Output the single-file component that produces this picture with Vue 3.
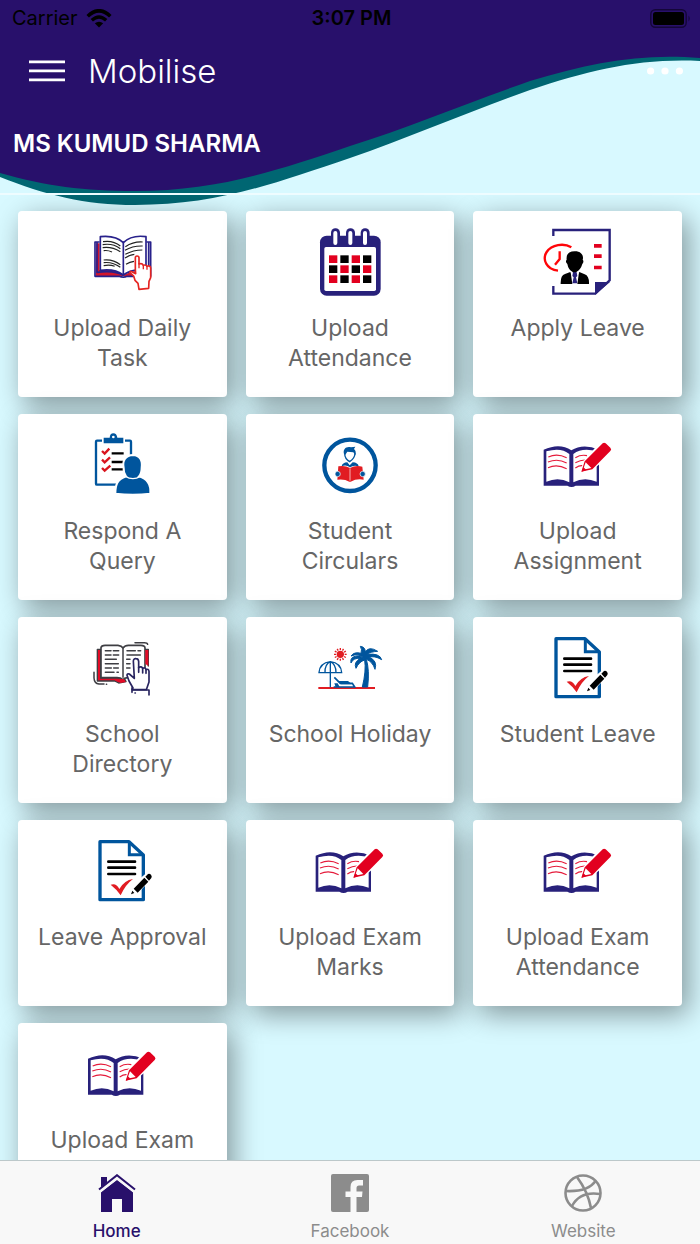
<script setup>
const cards = [
  { label: 'Upload Daily Task', icon: 'task', box: '-8 0 270 240' },
  { label: 'Upload Attendance', icon: 'calendar', box: '0 0 270 240' },
  { label: 'Apply Leave', icon: 'apply', box: '-5 0 270 240' },
  { label: 'Respond A Query', icon: 'query', box: '-8 -6 270 240' },
  { label: 'Student Circulars', icon: 'circular', box: '0 -6 270 240' },
  { label: 'Upload Assignment', icon: 'book', box: '-5 -6 270 240' },
  { label: 'School Directory', icon: 'directory', box: '-8 -12 270 240' },
  { label: 'School Holiday', icon: 'holiday', box: '0 -12 270 240' },
  { label: 'Student Leave', icon: 'leave', box: '-6 -12 270 240' },
  { label: 'Leave Approval', icon: 'leave', box: '-6 -12 270 240' },
  { label: 'Upload Exam Marks', icon: 'book', box: '-5 -6 270 240' },
  { label: 'Upload Exam Attendance', icon: 'book', box: '-5 -6 270 240' },
  { label: 'Upload Exam', icon: 'book', box: '-6 -6 270 240' },
]
const days = Array.from({ length: 12 }, (_, i) => ({
  x: 72 + (i % 4) * 34,
  y: 106 + Math.floor(i / 4) * 30,
  color: (i + Math.floor(i / 4)) % 2 ? '#000' : '#e2001f',
}))
const rays = Array.from({ length: 12 }, (_, i) => i * 30)
</script>

<template>
  <div class="app">
    <svg class="wave" viewBox="0 0 700 206" preserveAspectRatio="none" aria-hidden="true">
      <path fill="#006672" d="M0 0H700V61C640 58 590 70 530 90C470 111 410 137 350 158C270 185 215 205 135 205C85 205 45 195 0 177Z" />
      <path fill="#28106b" d="M0 0H700V58C640 53 590 63 530 81C470 102 410 127 350 146C270 173 215 191 135 191C85 191 45 186 0 173Z" />
    </svg>

    <header class="header">
      <div class="status">
        <span class="carrier">Carrier
          <svg width="26" height="19" viewBox="0 0 26 19" fill="none" stroke="#000" aria-hidden="true">
            <path d="M1.700 7.200Q13-3.600 24.300 7.200" stroke-width="3.600" />
            <path d="M5.800 11.300Q13 4.700 20.200 11.300" stroke-width="3.400" />
            <path d="M13 18.500L8.800 14.300Q13 11 17.200 14.300Z" fill="#000" stroke="none" />
          </svg>
        </span>
        <span class="time">3:07 PM</span>
        <svg class="battery" width="41" height="19" viewBox="0 0 41 19" aria-hidden="true">
          <rect x=".8" y=".8" width="35.400" height="17.400" rx="4.500" fill="none" stroke="#140639" stroke-width="1.400" />
          <rect x="3" y="3" width="31" height="13" rx="2.500" />
          <path fill="#140639" d="M38.500 6.500Q41 9.500 38.500 12.500Z" />
        </svg>
      </div>
      <div class="bar">
        <button class="plain" aria-label="Menu">
          <svg width="36" height="22" viewBox="0 0 36 22" fill="#fff"><path d="M0 .5H36V3.200H0ZM0 9.500H36V12.200H0ZM0 18.500H36V21.200H0Z" /></svg>
        </button>
        <h1>Mobilise</h1>
        <button class="plain" aria-label="More">
          <svg width="36" height="8" viewBox="0 0 36 8" fill="#fff"><circle cx="3.600" cy="4" r="3.600" /><circle cx="18" cy="4" r="3.600" /><circle cx="32.400" cy="4" r="3.600" /></svg>
        </button>
      </div>
      <p class="name">MS KUMUD SHARMA</p>
    </header>

    <main class="content">
      <div class="grid">
        <button v-for="(card, index) in cards" :key="index" class="card">
          <svg class="icon" :viewBox="card.box" fill="none" aria-hidden="true">
            <g v-if="card.icon === 'task'" stroke-linejoin="round">
              <path fill="#d2152c" d="M50 70H60V150Q105 145 131 165Q165 150 200 150V168H48Z" />
              <path stroke="#28218b" stroke-width="5" d="M60 66H46V169H118Q131 174 143 169H213V66H200M52 68V157Q105 150 131 166M207 68V155" />
              <path fill="#fff" stroke="#28218b" stroke-width="5" d="M62 50Q108 45 131 68Q155 44 199 50V152Q155 145 131 165Q105 145 62 151Z" />
              <path stroke="#28218b" stroke-width="5" d="M131 68V165" />
              <path stroke="#222" stroke-width="3.500" d="M70 65Q100 60 122 78M69 74Q99 69 122 86M69 83Q96 79 122 95M72 92Q85 90 97 96M72 120Q100 117 122 134M72 128Q99 125 122 142M72 137Q90 133 105 139M137 80Q162 64 189 66M136 91Q159 77 189 78M137 103Q161 90 188 90M136 114Q151 104 164 103M139 133Q150 126 163 124" />
              <path fill="#fff" stroke="#e52421" stroke-width="5" d="M167 149V113Q167 108 172 108Q178 108 178 113V132Q187 128 191 136Q199 133 202 139Q213 135 213 145V173L208 184L207 205L178 208L175 190L166 181L162 168L151 158Q151 153 157 155L168 161Z" />
              <path stroke="#e52421" stroke-width="4" d="M178 129V145M191 135V148M202 138V149" />
            </g>
            <g v-else-if="card.icon === 'calendar'">
              <rect x="45" y="47" width="182" height="180" rx="20" fill="#28217b" />
              <rect x="58" y="81" width="155" height="132" rx="5" fill="#fff" />
              <rect v-for="x in [78, 123, 167]" :key="x" :x="x" y="25" width="27" height="55" rx="13" fill="#28217b" />
              <rect v-for="x in [85, 130, 174]" :key="x + 500" :x="x" y="33" width="12" height="42" rx="6" fill="#fff" />
              <rect v-for="day in days" :key="day.x * day.y" :x="day.x" :y="day.y" width="25" height="23" :fill="day.color" />
            </g>
            <g v-else-if="card.icon === 'apply'">
              <path stroke="#28217b" stroke-width="7" d="M56 48V30H225V181L182 221H56V198" />
              <path fill="#28217b" d="M181 186H226L181 224Z" />
              <path fill="#e2001f" d="M178 72H201V83H178ZM178 103H201V114H178ZM178 137H201V148H178Z" />
              <path stroke="#ff0508" stroke-width="7" d="M110 82C87 68 51 74 36 96C22 118 35 148 70 152M75 94V117L61 134" />
              <path fill="#000" d="M120 94C141 93 148 109 144 119Q149 124 143 132Q138 149 126 155L120 164L113 155Q101 149 98 132Q91 125 96 119C94 103 102 94 120 94ZM78 192Q77 166 91 162L107 156L120 180L134 156L150 163Q164 168 163 192Z" />
              <path fill="#fff" d="M108 157L120 164L133 157L128 192H113Z" />
              <path fill="#28217b" d="M115 157H126L128 168L124 172L128 190H113L117 172L113 168Z" />
            </g>
            <g v-else-if="card.icon === 'query'">
              <rect x="49" y="47" width="105" height="132" rx="3" stroke="#00559d" stroke-width="7" />
              <path fill="#fff" d="M67 42H136V57H67Z" />
              <path fill="#00559d" d="M72 38H90Q91 25 101 25Q111 25 113 38H131V55H72ZM101 32A4 4 0 1 0 101 40A4 4 0 1 0 101 32Z" fill-rule="evenodd" />
              <path stroke="#d9141e" stroke-width="7" d="M67 78L75 86L89 71M67 104L75 112L91 97M67 129L75 137L92 122" />
              <path stroke="#000" stroke-width="7" d="M96 85H132M96 111H132M96 133H132" />
              <path fill="#00559d" stroke="#fff" stroke-width="6" d="M107 206C107 176 114 163 139 154Q131 143 132 128C127 105 139 91 160 90C181 91 189 106 186 128Q186 145 178 154C204 161 214 178 212 206Q160 213 107 206Z" />
              <path stroke="#fff" stroke-width="4" d="M137 154Q160 168 182 154" />
            </g>
            <g v-else-if="card.icon === 'circular'">
              <circle cx="135" cy="121" r="77" stroke="#00559d" stroke-width="13" />
              <path fill="#00559d" d="M117 87C113 72 124 63 138 67L151 65L147 72Q155 79 151 91L145 82L127 80L121 89Z" />
              <path stroke="#00559d" stroke-width="4" d="M119 85Q119 102 134 110Q149 101 150 85" />
              <path fill="#00559d" d="M110 124Q112 113 127 112L134 121L143 112Q159 113 161 124Q146 119 135 127Q123 118 110 124Z" />
              <path fill="#e11c22" d="M100 124Q120 120 135 129Q152 120 172 125L176 164Q155 160 137 170H133Q118 161 97 164Z" />
              <path stroke="#fff" stroke-width="2" d="M135 130V167" />
              <circle cx="98" cy="147" r="8" fill="#00559d" stroke="#fff" stroke-width="2" />
              <circle cx="173" cy="147" r="8" fill="#00559d" stroke="#fff" stroke-width="2" />
            </g>
            <g v-else-if="card.icon === 'book'">
              <path fill="#28217b" d="M27 74Q75 52 110 76Q145 54 193 74V182H123Q111 190 98 182H27Z" />
              <path fill="#fff" d="M35 79Q79 66 104 87V172Q71 154 35 170ZM116 87Q143 67 186 79V170Q149 154 116 172Z" />
              <path fill="#28217b" d="M35 176Q66 154 103 176ZM117 176Q149 154 185 176Z" />
              <path stroke="#e51b3b" stroke-width="3.500" d="M41 96Q67 84 96 98M40 111Q69 99 96 114M40 128Q67 116 96 131M122 98Q139 88 157 92M122 113Q139 104 153 105M122 129Q134 121 143 122" />
              <path fill="#fff" d="M136 146L148 106L195 53L229 90L184 126L157 145Z" />
              <path fill="#e2001f" d="M140 140L150 109L204 55Q208 52 213 55L227 68Q232 73 227 78L173 133Z" />
              <path fill="#fff" d="M145 134L153 112L170 129Z" />
              <path fill="#e2001f" d="M141 140L146 126L155 135Z" />
            </g>
            <g v-else-if="card.icon === 'directory'" stroke-linejoin="round" stroke-linecap="round">
              <path fill="#e30c27" stroke="#3e3e43" stroke-width="4" d="M63 58H53V153H105L117 159L139 155L133 143L63 144ZM197 58H206V108" />
              <path fill="#fff" stroke="#3e3e43" stroke-width="5" d="M64 53Q65 46 76 46H115Q126 47 130 54Q136 46 146 46H184Q196 46 196 54V143H144Q133 144 130 149Q123 143 112 143H64Z" />
              <path fill="#e30c27" d="M197 60H206V109L197 101ZM100 147H132L139 156L123 159Z" />
              <path stroke="#3e3e43" stroke-width="4.500" d="M130 55V142M77 62H94M101 62H117M77 75H94M101 75H117M77 88H110M77 101H116M77 114H95M102 114H116M77 127H103M112 127H116M142 62H167M175 62H183M142 75H182M141 88H151M141 101H151M141 114H151M43 127V144Q44 161 58 162H73M80 163H81M166 38H194Q203 38 204 43" />
              <path fill="#fff" stroke="#28245f" stroke-width="5" d="M164 145L161 93Q162 85 169 86Q176 86 177 94V113Q185 107 189 115Q197 111 199 119Q207 115 208 124V156L200 179H158Q155 170 160 174L148 153L142 136Q142 130 149 132Z" />
              <path stroke="#28245f" stroke-width="5" d="M177 112V127M189 115V129M199 119V130M157 178V187M157 180H208V195M166 189H167" />
            </g>
            <g v-else-if="card.icon === 'holiday'">
              <path fill="#e11c22" d="M40 171H210V177H40Z" />
              <circle cx="106" cy="73" r="11" fill="#e11c22" />
              <path v-for="ray in rays" :key="ray" stroke="#e11c22" stroke-width="4" d="M106 54V60" :transform="`rotate(${ray} 106 73)`" />
              <path stroke="#00559d" stroke-width="4" d="M76 95Q44 99 42 128H110Q108 99 76 95ZM76 95V172M76 95Q59 103 60 128M76 95Q93 103 93 128" />
              <path stroke="#00559d" stroke-width="5" d="M86 171H149L142 160H106L88 142" />
              <path fill="#00559d" d="M97 153H129L141 163H108ZM88 160L98 160L104 171H92Z" />
              <path fill="#00559d" stroke="#00559d" stroke-width="3" d="M176 86Q166 67 138 78Q148 64 168 70Q172 58 166 49Q181 51 181 66Q192 47 218 64Q196 65 188 73Q224 69 230 89Q208 76 193 82Q218 92 210 118Q203 95 184 88Q194 120 188 171H172Q184 122 179 90Q162 95 153 115Q145 97 166 85Q145 83 138 99Q133 77 165 77Z" />
            </g>
            <g v-else>
              <path stroke="#00559d" stroke-width="10" stroke-linejoin="round" d="M63 26H150L193 66V200H63Z" />
              <path stroke="#00559d" stroke-width="9" d="M151 27V65H192" />
              <path stroke="#000" stroke-width="8" stroke-linecap="round" d="M88 86H168M88 104H168M88 123H168" />
              <path fill="#e11c22" d="M95 155Q112 149 121 168Q136 142 162 138Q139 155 125 187Q113 169 95 155Z" />
              <path fill="#fff" d="M151 187L163 153L207 116L224 132L183 174Z" />
              <path fill="#000" d="M156 184L160 173L166 180ZM164 167L196 134L208 146L176 179ZM199 131L207 123Q211 120 216 125Q220 130 217 135L210 143Z" />
            </g>
          </svg>
          <span class="label">{{ card.label }}</span>
        </button>
      </div>
    </main>

    <nav class="tabs">
      <a href="#home" class="tab active">
        <svg width="38" height="38" viewBox="0 0 38 38" fill="currentColor" aria-hidden="true">
          <path d="M3 18L19 6L35 18V38H24V25H14V38H3Z" />
          <path d="M3 16V3H9V10Z" />
          <path d="M1 17.500L19 3L37 17.500" fill="none" stroke="#f8f8f8" stroke-width="4" />
          <path d="M1 15.500L19 1.200L37 15.500" fill="none" stroke="currentColor" stroke-width="2" />
        </svg>
        <span>Home</span>
      </a>
      <a href="#facebook" class="tab">
        <svg width="38" height="38" viewBox="0 0 38 38" aria-hidden="true">
          <rect width="38" height="38" rx="2" fill="currentColor" />
          <path fill="#f8f8f8" d="M19.500 38V23H14.500V17.500H19.500V13Q19.500 6 26.500 6H32V11.500H28Q25.500 11.500 25.500 14V17.500H31.500L31 23H25.500V38Z" />
        </svg>
        <span>Facebook</span>
      </a>
      <a href="#website" class="tab">
        <svg width="38" height="38" viewBox="0 0 38 38" fill="none" stroke="currentColor" stroke-width="2.600" aria-hidden="true">
          <circle cx="19" cy="19" r="17.500" />
          <path d="M13 3Q24 18 27 34M2 17Q24 18 31.500 7M8 32Q16 17 36 20" />
        </svg>
        <span>Website</span>
      </a>
    </nav>
  </div>
</template>

<style>
body {
  margin: 0;
}
</style>

<style scoped>
.app {
  position: relative;
  display: flex;
  flex-direction: column;
  height: 100vh;
  overflow: hidden;
  background: #d8f9ff;
  font-family: Inter, "Liberation Sans", sans-serif;
}
.wave {
  position: absolute;
  top: 0;
  left: 0;
  width: 100%;
  height: 206px;
}
.header {
  position: relative;
  border-bottom: 2px solid #eefcff;
}
.status {
  display: grid;
  grid-template-columns: 1fr auto 1fr;
  align-items: center;
  height: 36px;
  padding: 0 9px 0 12px;
  font-size: 20px;
  color: #000;
}
.carrier {
  display: flex;
  align-items: center;
  gap: 8px;
}
.time {
  font-weight: 600;
}
.battery {
  justify-self: end;
}
.bar {
  display: flex;
  align-items: center;
  height: 70px;
  padding: 0 17px 0 29px;
  gap: 23px;
}
.plain {
  display: flex;
  padding: 0;
  border: 0;
  background: none;
}
h1 {
  flex: 1;
  margin: 0;
  font-size: 33px;
  font-weight: 300;
  line-height: 40px;
  color: #fff;
}
.name {
  margin: 0;
  padding: 24px 13px 35px;
  font-size: 24px;
  font-weight: 600;
  line-height: 28px;
  color: #fff;
}
.content {
  position: relative;
  flex: 1;
  min-height: 0;
  overflow-y: auto;
  scrollbar-width: none;
}
.grid {
  display: grid;
  grid-template-columns: repeat(3, 1fr);
  gap: 17px 19px;
  padding: 16px 18px;
}
.card {
  display: flex;
  flex-direction: column;
  align-items: center;
  min-height: 186px;
  padding: 9px 18px;
  border: 0;
  border-radius: 4px;
  background: #fff;
  box-shadow: 6px 8px 28px rgba(0, 0, 0, 0.4);
  font: inherit;
}
.icon {
  flex: none;
  width: 90px;
  height: 80px;
}
.label {
  margin-top: 13px;
  font-size: 23px;
  line-height: 30px;
  color: #666;
}
.tabs {
  position: relative;
  display: grid;
  grid-template-columns: repeat(3, 1fr);
  height: 83px;
  border-top: 1px solid #bcc8ca;
  background: #f8f8f8;
}
.tab {
  display: flex;
  flex-direction: column;
  align-items: center;
  gap: 9px;
  padding-top: 13px;
  font-size: 17px;
  font-weight: 400;
  line-height: 20px;
  color: #8c8c8c;
  text-decoration: none;
}
.tab.active {
  color: #28106b;
  font-weight: 500;
}
</style>
